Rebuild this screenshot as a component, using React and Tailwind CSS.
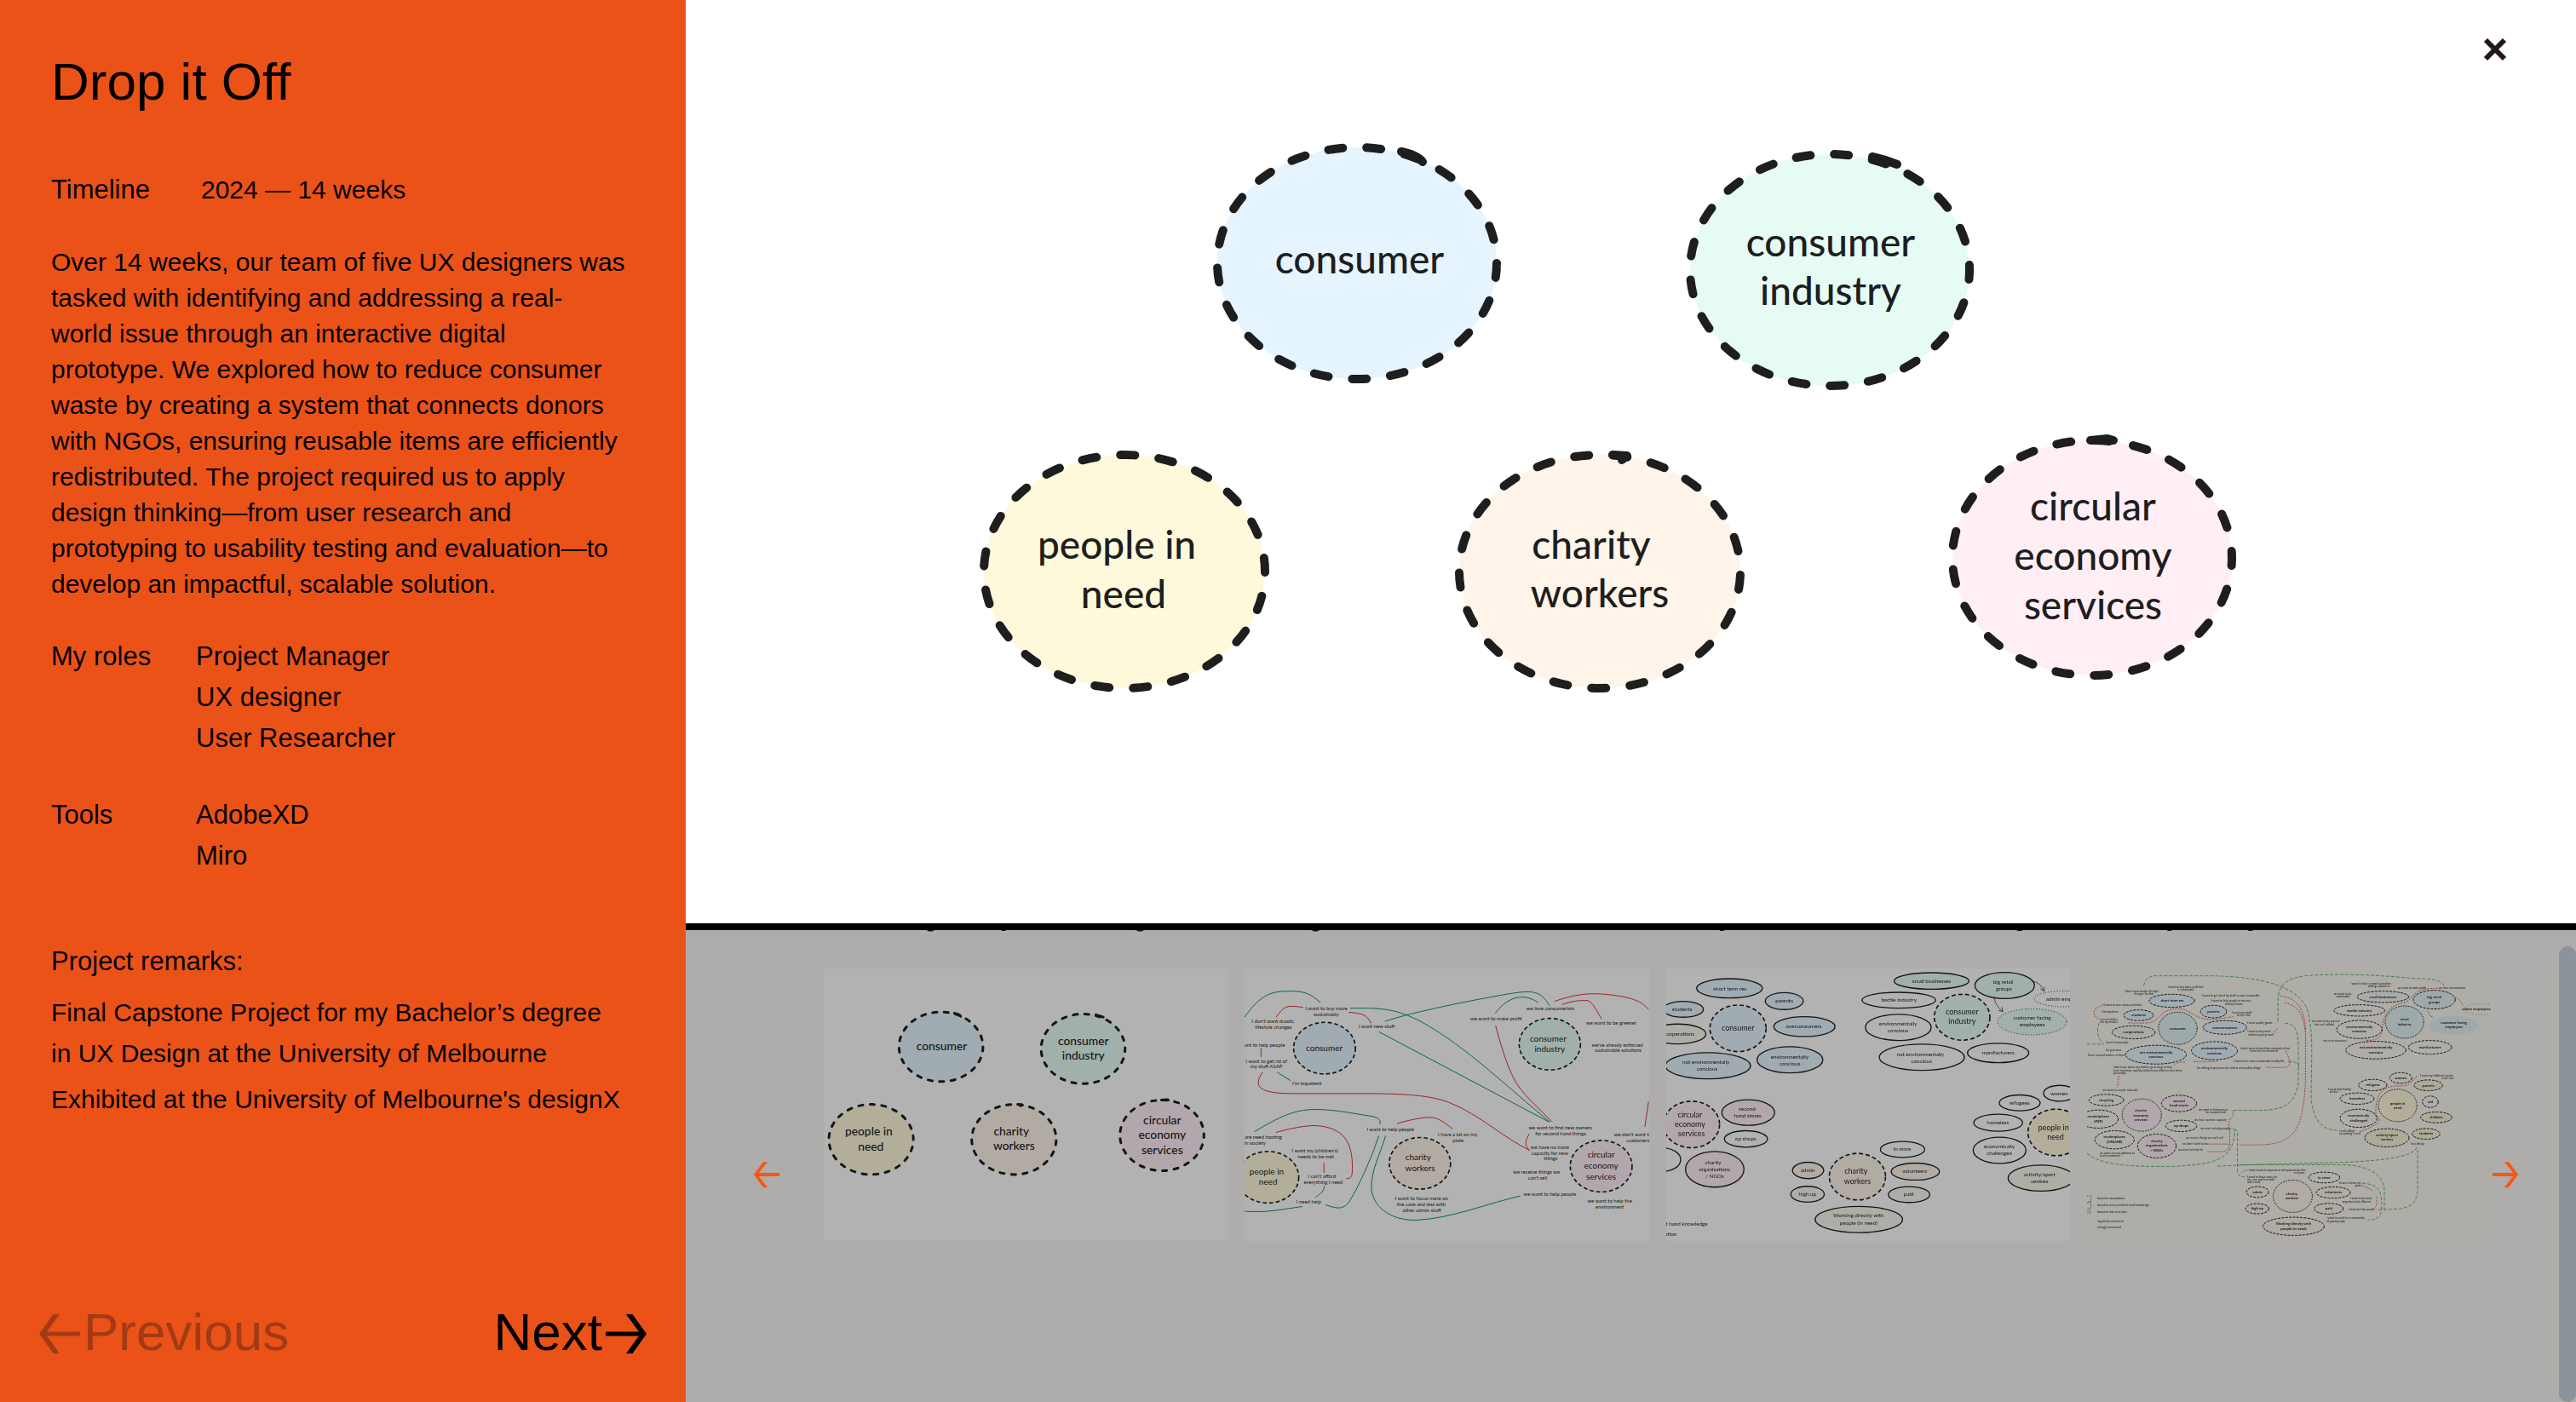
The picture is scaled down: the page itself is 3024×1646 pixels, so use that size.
import React from "react";

const BLUE = "#e5f4ff";
const GREEN = "#e6fbf4";
const YELLOW = "#fff9db";
const PEACH = "#fff4e9";
const PINK = "#ffeff5";
const INK = "#1e1e1e";

/* Centred lines of text; each line is [x, baseline, text]. */
function Labels({ lines, size, weight = 400, anchor = "middle" }) {
  return (
    <g fontSize={size} fontWeight={weight} textAnchor={anchor} fill={INK} fontFamily="Lato, sans-serif">
      {lines.map(([x, y, text], i) => (
        <text key={i} x={x} y={y}>
          {text}
        </text>
      ))}
    </g>
  );
}

/* Ellipses; each one is [cx, cy, rx, ry, fill]. */
function Bubbles({ items, width, dash, cap = "butt" }) {
  return items.map(([cx, cy, rx, ry, fill], i) => (
    <ellipse
      key={i}
      cx={cx}
      cy={cy}
      rx={rx}
      ry={ry}
      fill={fill || "none"}
      stroke={INK}
      strokeWidth={width}
      strokeDasharray={dash}
      strokeLinecap={cap}
    />
  ));
}

function Links({ paths, color, width, dash, opacity }) {
  return (
    <g fill="none" stroke={color} strokeWidth={width} strokeDasharray={dash} opacity={opacity}>
      {paths.map((d, i) => (
        <path key={i} d={d} />
      ))}
    </g>
  );
}

const groups = [
  { cx: 1593, cy: 309, rx: 164, ry: 136, fill: BLUE, offset: 0, tail: "M1645 178Q1664 182 1670 190" },
  { cx: 2148, cy: 317, rx: 164, ry: 136, fill: GREEN, offset: 6, tail: "M2198 184Q2212 187 2227 193" },
  { cx: 1320, cy: 671, rx: 165, ry: 137, fill: YELLOW, offset: 16, tail: "" },
  { cx: 1878, cy: 671, rx: 165, ry: 137, fill: PEACH, offset: -4, tail: "M1893 534L1910 535L1904 540" },
  { cx: 2456, cy: 655, rx: 164, ry: 138, fill: PINK, offset: 8, tail: "M2454 517L2474 515L2481 517" },
];

const groupLabels = [
  [1596, 321, "consumer"],
  [2149, 301, "consumer"],
  [2149, 358, "industry"],
  [1311, 656, "people in"],
  [1319, 714, "need"],
  [1868, 656, "charity"],
  [1878, 713, "workers"],
  [2457, 611, "circular"],
  [2457, 669, "economy"],
  [2457, 727, "services"],
];

function StakeholderMap({ viewBox, className, label }) {
  return (
    <svg viewBox={viewBox} className={className} role="img" aria-label={label}>
      {groups.map((g) => (
        <g key={g.cx} stroke={INK} strokeWidth="10" strokeLinecap="round" strokeLinejoin="round">
          <ellipse
            cx={g.cx}
            cy={g.cy}
            rx={g.rx}
            ry={g.ry}
            fill={g.fill}
            pathLength="945"
            strokeDasharray="17 28"
            strokeDashoffset={g.offset}
          />
          {g.tail && <path d={g.tail} fill="none" />}
        </g>
      ))}
      <Labels lines={groupLabels} size={46} weight={500} />
    </svg>
  );
}

function NeedsMap() {
  return (
    <svg viewBox="33 50 1424 960" className="block h-auto w-full bg-white" role="img" aria-label="Map of stakeholder needs">
      <Links
        color="#099268"
        width={3}
        paths={[
          "M33 222C90 140 130 130 190 130C250 130 265 140 300 170",
          "M405 190H470C560 192 600 210 660 240C820 330 960 470 1108 590",
          "M528 236L600 215C740 180 900 150 980 137C1060 125 1080 135 1108 182",
          "M916 208C950 165 980 152 1010 151C1040 151 1055 163 1068 170",
          "M506 273L1108 592",
          "M91 330V362",
          "M148 416L196 446",
          "M67 626C160 570 210 548 280 547C350 547 410 560 460 568C500 572 515 580 510 600",
          "M506 640C480 720 430 830 400 875C380 900 360 898 318 883",
          "M530 640C510 710 478 760 480 830C490 900 560 940 640 937C760 932 900 875 1005 852",
          "M314 815C315 835 300 845 283 857",
          "M33 906C110 912 160 900 237 889",
        ]}
      />
      <Links
        color="#e03131"
        width={3}
        paths={[
          "M144 222C175 180 180 180 240 187",
          "M400 205C450 207 465 215 479 243",
          "M1125 166C1200 140 1240 138 1290 140C1380 147 1430 160 1457 195",
          "M1152 177C1190 165 1210 162 1242 163C1262 170 1270 195 1292 228",
          "M918 252C950 370 975 440 1010 480C1040 520 1090 560 1117 592",
          "M96 416C60 470 90 490 200 491H480C620 492 700 500 760 525C860 565 950 650 1040 692",
          "M144 628C200 612 250 604 280 604C380 608 420 660 412 775Q410 792 390 791",
          "M313 735V770",
          "M570 597C620 582 660 575 690 575C720 578 740 595 766 616",
          "M1036 634C1018 665 1024 675 1036 690",
          "M1457 520L1444 608",
        ]}
      />
      <Bubbles
        width={5}
        dash="14 9"
        items={[
          [315, 331, 109, 91, BLUE],
          [1109, 317, 108, 91, GREEN],
          [115, 786, 109, 91, YELLOW],
          [651, 737, 108, 91, PEACH],
          [1290, 747, 109, 91, PINK],
        ]}
      />
      <Labels
        size={30}
        lines={[
          [314, 340, "consumer"],
          [1103, 307, "consumer"],
          [1109, 345, "industry"],
          [111, 776, "people in"],
          [116, 812, "need"],
          [645, 726, "charity"],
          [652, 764, "workers"],
          [1290, 718, "circular"],
          [1290, 757, "economy"],
          [1290, 794, "services"],
        ]}
      />
      <Labels
        size={18}
        lines={[
          [321, 196, "I want to buy more"],
          [321, 218, "sustainably"],
          [133, 242, "I don't want drastic"],
          [135, 263, "lifestyle changes"],
          [499, 259, "I want new stuff"],
          [92, 325, "I want to help people"],
          [110, 382, "I want to get rid of"],
          [110, 402, "my stuff ASAP"],
          [253, 462, "I'm impatient"],
          [1111, 196, "we love consumerism"],
          [920, 232, "we want to make profit"],
          [1326, 249, "we want to be greener"],
          [1347, 325, "we've already enforced"],
          [1350, 345, "sustainable solutions"],
          [547, 625, "I want to help people"],
          [784, 643, "I have a lot on my"],
          [786, 664, "plate"],
          [1146, 617, "we want to find new owners"],
          [1147, 639, "for second hand things"],
          [1420, 641, "we don't want to lose"],
          [1420, 662, "customers"],
          [1109, 687, "we have no more"],
          [1109, 707, "capacity for new"],
          [1112, 727, "things"],
          [85, 652, "we are need hosting"],
          [70, 672, "in society"],
          [281, 699, "I want my (children's)"],
          [284, 720, "needs to be met"],
          [306, 788, "I can't afford"],
          [310, 809, "everything I need"],
          [259, 880, "I need help"],
          [657, 866, "I want to focus more on"],
          [656, 887, "the case and less with"],
          [658, 908, "other admin stuff"],
          [1062, 775, "we receive things we"],
          [1066, 795, "can't sell"],
          [1109, 853, "we want to help people"],
          [1320, 875, "we want to help the"],
          [1320, 896, "environment"],
        ]}
      />
    </svg>
  );
}

function SegmentsMap() {
  return (
    <svg viewBox="45 50 1424 960" className="block h-auto w-full bg-white" role="img" aria-label="Map of stakeholder segments">
      <defs>
        <pattern id="hatch" width="12" height="12" patternUnits="userSpaceOnUse">
          <rect width="12" height="12" fill="#fbfaf4" />
          <path d="M0 12L12 0M0 0L12 12" stroke="#efe9cf" strokeWidth="1" />
        </pattern>
      </defs>
      <Bubbles
        width={4}
        items={[
          [268, 120, 116, 34, BLUE],
          [461, 165, 67, 30, BLUE],
          [105, 194, 71, 28, BLUE],
          [532, 255, 108, 35, BLUE],
          [85, 281, 100, 35, "url(#hatch)"],
          [192, 393, 150, 46, BLUE],
          [481, 372, 116, 46, BLUE],
          [980, 94, 132, 29, GREEN],
          [1238, 110, 105, 46, GREEN],
          [865, 162, 130, 28],
          [863, 258, 116, 46],
          [946, 363, 150, 46],
          [1215, 348, 108, 34],
          [334, 558, 93, 45, PINK],
          [326, 651, 76, 29],
          [30, 724, 66, 42],
          [216, 758, 103, 63, PINK],
          [878, 688, 78, 28],
          [545, 762, 55, 29, PEACH],
          [923, 766, 85, 30, PEACH],
          [543, 846, 59, 28, "url(#hatch)"],
          [901, 847, 73, 28, "url(#hatch)"],
          [724, 935, 154, 46, "url(#hatch)"],
          [1291, 524, 72, 28],
          [1432, 490, 57, 28],
          [1215, 594, 86, 30],
          [1220, 691, 93, 46],
          [1366, 789, 116, 46, "url(#hatch)"],
        ]}
      />
      <Bubbles
        width={3}
        dash="3 7"
        items={[
          [1335, 238, 122, 46, GREEN],
          [1450, 157, 108, 28],
        ]}
      />
      <Bubbles
        width={5}
        dash="15 9"
        items={[
          [298, 261, 99, 82, BLUE],
          [1088, 222, 98, 81, GREEN],
          [134, 600, 99, 82, PINK],
          [719, 784, 99, 82, PEACH],
          [1419, 628, 99, 82, YELLOW],
        ]}
      />
      <Links
        color={INK}
        width={2}
        paths={["M1338 96Q1362 98 1377 130M1377 130L1364 122M1377 130L1378 115", "M1202 152Q1202 180 1232 202M1232 202L1216 198M1232 202L1228 186"]}
      />
      <Labels
        size={27}
        lines={[
          [298, 269, "consumer"],
          [1088, 212, "consumer"],
          [1088, 246, "industry"],
          [129, 575, "circular"],
          [129, 609, "economy"],
          [134, 643, "services"],
          [714, 775, "charity"],
          [719, 809, "workers"],
          [1410, 620, "people in"],
          [1417, 653, "need"],
        ]}
      />
      <Labels
        size={19}
        lines={[
          [269, 127, "short term res"],
          [461, 171, "parents"],
          [101, 201, "students"],
          [530, 261, "overconsumers"],
          [92, 287, "corperations"],
          [185, 387, "not environmentally"],
          [189, 411, "concious"],
          [480, 367, "environmentally"],
          [481, 391, "concious"],
          [980, 100, "small businesses"],
          [1233, 103, "big retail"],
          [1236, 127, "groups"],
          [865, 168, "textile industry"],
          [862, 252, "environmentally"],
          [862, 276, "concious"],
          [941, 358, "not environmentally"],
          [945, 382, "concious"],
          [1215, 353, "manifacturers"],
          [1335, 231, "customer facing"],
          [1335, 255, "employees"],
          [1456, 163, "admin employees"],
          [330, 552, "second"],
          [332, 576, "hand stores"],
          [325, 657, "op shops"],
          [210, 740, "charity"],
          [215, 765, "organisations"],
          [216, 789, "/ NGOs"],
          [877, 694, "in store"],
          [544, 768, "admin"],
          [921, 771, "volunteers"],
          [543, 852, "high up"],
          [900, 852, "paid"],
          [723, 928, "Working directly with"],
          [723, 953, "people (in need)"],
          [1290, 530, "refugees"],
          [1431, 496, "women"],
          [1214, 599, "homeless"],
          [1219, 684, "economically"],
          [1219, 708, "challenged"],
          [1361, 783, "activity/sport"],
          [1361, 807, "centres"],
          [104, 956, "first hand knowledge"],
          [22, 992, "no assumption"],
        ]}
      />
    </svg>
  );
}

function FullMap() {
  return (
    <svg viewBox="0 0 1424 960" className="block h-auto w-full bg-[#f8f7ef]" role="img" aria-label="Complete ecosystem map">
      <Links
        color="#2f9e44"
        width={3}
        dash="12 6"
        opacity={0.75}
        paths={[
          "M200 62Q206 28 240 26H440C640 30 740 70 775 140C800 230 790 300 790 465C800 540 830 570 885 571",
          "M673 186V110C675 60 700 35 770 26C860 18 1000 20 1150 35Q1255 35 1257 62",
          "M697 193C740 195 745 230 745 290V400C735 480 690 500 610 500H513",
          "M710 328Q748 328 747 350",
          "M0 267H58C30 240 35 200 48 185",
          "M0 652C60 700 180 698 300 698C420 690 520 690 520 570Q515 562 500 565",
          "M520 565Q533 570 530 600V710Q530 735 555 735",
          "M460 697C600 690 720 688 880 684C1000 680 1160 670 1164 625",
          "M540 692H880C1000 690 1050 730 1048 790V850",
          "M1165 640V770C1165 850 1120 850 1020 850",
          "M970 757C1040 760 1040 800 1038 850Q1035 888 990 886",
        ]}
      />
      <Links
        color="#e03131"
        width={3}
        dash="6 4"
        opacity={0.8}
        paths={[
          "M145 192C250 195 230 190 270 155C320 130 350 145 380 165C430 190 450 178 515 170",
          "M60 128C10 140 20 170 45 180",
          "M680 97C740 100 770 150 770 220V400C760 560 740 622 600 622H535",
          "M697 121C740 130 765 160 768 220",
          "M700 290C720 330 720 350 690 349H632",
          "M375 328H460",
          "M345 330Q320 328 305 342",
          "M112 378L107 420",
          "M653 232L670 212",
          "M513 503Q520 520 505 530C495 545 503 560 503 590V622Q500 646 470 646H425",
          "M435 619H503",
          "M1237 70C1140 70 1160 100 1120 120C1060 130 1045 170 1042 200C1040 250 1020 255 980 253",
          "M1163 379C1140 400 1140 416 1100 414C1040 414 1015 440 1018 520Q1060 540 960 576",
          "M543 722Q555 710 570 711",
          "M970 764L1008 783M1021 805V835L1008 850",
        ]}
      />
      <Bubbles
        width={3}
        dash="9 4"
        items={[
          [299, 114, 80, 23, BLUE],
          [182, 165, 52, 19, BLUE],
          [446, 152, 46, 22, BLUE],
          [164, 225, 76, 23, "#f0f3ee"],
          [486, 208, 77, 24, BLUE],
          [243, 304, 107, 33, BLUE],
          [449, 290, 81, 32, BLUE],
          [1043, 100, 91, 20, "#eef5f3"],
          [1224, 110, 74, 33, "#e2f1f3"],
          [960, 148, 90, 20],
          [960, 215, 80, 32],
          [1018, 288, 106, 31],
          [1209, 278, 76, 24],
          [68, 464, 61, 20],
          [324, 476, 62, 29, PINK],
          [40, 531, 70, 32],
          [332, 555, 55, 20],
          [97, 604, 69, 32],
          [246, 626, 68, 42, PINK],
          [836, 737, 55, 19],
          [601, 788, 39, 19, PEACH],
          [868, 790, 60, 20, PEACH],
          [600, 847, 41, 18, "#fbf3ea"],
          [852, 847, 51, 19, "#fbf3ea"],
          [728, 909, 108, 32, "#fbf3ea"],
          [1106, 386, 39, 19],
          [1007, 411, 50, 20],
          [1203, 412, 50, 19, "#f7f3d8"],
          [952, 459, 60, 20],
          [1210, 470, 28, 20],
          [957, 528, 65, 32],
          [1231, 525, 55, 19, "#f7f3d8"],
          [1057, 597, 78, 32, "#f7f3d8"],
          [1195, 583, 49, 19, "#f7f3d8"],
        ]}
      />
      <ellipse cx="1293" cy="200" rx="87" ry="33" fill="#e2f1f3" />
      <Bubbles
        width={3}
        dash="5 4"
        items={[
          [320, 211, 68, 57, "#e2f1f3"],
          [1119, 189, 68, 57, "#e2f1f3"],
          [193, 517, 69, 57, PINK],
          [725, 803, 69, 57, PEACH],
          [1095, 483, 68, 57, YELLOW],
        ]}
      />
      <Bubbles width={2} dash="2 9" items={[[1390, 144, 62, 20]]} />
      <Links color={INK} width={2} dash="3 3" paths={["M1298 102Q1318 110 1324 130", "M1200 150Q1205 165 1222 175", "M0 802H14V822H0", "M0 826H14V845H0"]} />
      <rect x="0" y="850" width="15" height="16" fill="#cfd6e4" />
      <Labels
        size={13}
        weight={700}
        lines={[
          [320, 216, "consumer"],
          [300, 118, "short term res"],
          [182, 169, "students"],
          [446, 156, "parents"],
          [164, 229, "corperations"],
          [486, 212, "overconsumers"],
          [243, 300, "not environmentally"],
          [243, 316, "concious"],
          [449, 286, "environmentally"],
          [449, 302, "concious"],
          [1119, 184, "retail"],
          [1119, 200, "industry"],
          [1043, 104, "small businesses"],
          [1224, 106, "big retail"],
          [1224, 122, "groups"],
          [960, 152, "textile industry"],
          [960, 210, "environmentally"],
          [960, 226, "concious"],
          [1018, 283, "not environmentally"],
          [1018, 299, "concious"],
          [1209, 282, "manifacturers"],
          [1293, 195, "customer facing"],
          [1293, 211, "employees"],
          [1372, 147, "admin employees"],
          [190, 504, "circular"],
          [190, 521, "economy"],
          [190, 538, "services"],
          [68, 468, "recycling"],
          [324, 471, "second"],
          [324, 487, "hand stores"],
          [40, 526, "marketplaces"],
          [40, 542, "(P2P)"],
          [332, 559, "op shops"],
          [97, 599, "marketplaces"],
          [97, 615, "(ONLINE)"],
          [246, 613, "charity"],
          [246, 629, "organisations"],
          [246, 645, "/ NGOs"],
          [722, 798, "charity"],
          [722, 814, "workers"],
          [836, 741, "in store"],
          [601, 792, "admin"],
          [868, 794, "volunteers"],
          [600, 851, "high up"],
          [852, 851, "paid"],
          [728, 905, "Working directly with"],
          [728, 921, "people (in need)"],
          [1095, 480, "people in"],
          [1095, 496, "need"],
          [1106, 390, "women"],
          [1007, 415, "refugees"],
          [1203, 416, "parents"],
          [952, 463, "homeless"],
          [1210, 474, "old"],
          [957, 523, "economically"],
          [957, 539, "challenged"],
          [1231, 529, "children"],
          [1057, 592, "activity/sport"],
          [1057, 608, "centres"],
          [1195, 587, "students"],
        ]}
      />
      <Labels
        size={10}
        anchor="start"
        lines={[
          [132, 84, "I don't want drastic lifestyle"],
          [165, 94, "changes for this"],
          [285, 69, "I want to buy more stuff that"],
          [320, 79, "is sustainable"],
          [405, 100, "I want to get rid of my stuff as soon as possible"],
          [438, 118, "I want to help people in my area"],
          [486, 129, "without hassle"],
          [510, 158, "I want new stuff"],
          [528, 168, "all the time"],
          [60, 132, "I want to save money and time"],
          [52, 155, "I'm impatient"],
          [47, 184, "I need clothes"],
          [47, 193, "for my studies"],
          [565, 196, "I want quality goods"],
          [566, 226, "I want to buy more"],
          [568, 236, "without paying more"],
          [65, 265, "I want help people"],
          [65, 290, "I'm generous"],
          [2, 310, "I have unused clothes at home"],
          [540, 284, "I don't want to buy from companies that"],
          [575, 295, "harm the environment"],
          [518, 330, "I want to be more sustainable in daily life"],
          [387, 353, "I'm willing to pay more for ethical and quality things"],
          [92, 352, "I don't care where my clothes go as long as they"],
          [92, 362, "leave my house quickly, without any effort or cost to me"],
          [92, 372, "personally"],
          [55, 431, "we want to recycle materials"],
          [393, 500, "we want to find owners"],
          [418, 510, "for second hand"],
          [378, 536, "we have no more capacity"],
          [400, 569, "we want to help people"],
          [348, 602, "we receive things we can't sell"],
          [337, 623, "we don't want to lose"],
          [322, 644, "we want to help the"],
          [45, 655, "we want an easy platform to"],
          [45, 665, "reach customers"],
          [928, 57, "I want to have a good reputation"],
          [990, 67, "among customers"],
          [1095, 71, "we want to make profit"],
          [1240, 72, "we love consumerism"],
          [870, 93, "we want to be"],
          [878, 103, "sustainable"],
          [793, 190, "we want to be greener"],
          [803, 200, "but can't afford"],
          [833, 258, "we need resources"],
          [1175, 381, "I want my children's needs"],
          [1250, 391, "to be met"],
          [850, 429, "I need help finding"],
          [855, 439, "shelter"],
          [888, 576, "I can't afford"],
          [888, 586, "everything I need"],
          [1140, 621, "I need help"],
          [570, 714, "I don't want to depend on old systems for this"],
          [730, 724, "in future"],
          [565, 738, "I want to focus more on"],
          [565, 748, "the case and less with"],
          [565, 758, "other stuff"],
          [888, 759, "I have a lot on my"],
          [945, 769, "plate"],
          [928, 815, "I want to be more"],
          [900, 825, "organised and efficient"],
          [922, 852, "I want to help people"],
          [845, 884, "I want to work in a community"],
          [845, 894, "of good people"],
          [36, 813, "based on assumptions"],
          [36, 838, "based on survey and first hand knowledge"],
          [36, 861, "based on interview data"],
          [36, 894, "negatively connected"],
          [36, 917, "strongly connected"],
        ]}
      />
    </svg>
  );
}

function Arrow({ className, flip }) {
  return (
    <svg viewBox="0 0 48 46" className={className} aria-hidden="true">
      <g transform={flip ? "matrix(-1 0 0 1 48 0)" : undefined}>
        <path d="M0 20.500H39L24 0H31.500L48 23L31.500 46H24L39 25.500H0Z" fill="currentColor" />
      </g>
    </svg>
  );
}

function SmallArrow({ flip }) {
  return (
    <svg viewBox="0 0 30 30" className="block size-[30px]" aria-hidden="true">
      <g transform={flip ? "matrix(-1 0 0 1 30 0)" : undefined}>
        <path d="M0 13H24L14 0H19L30 15L19 30H14L24 17H0Z" fill="currentColor" />
      </g>
    </svg>
  );
}

function Facts({ term, items }) {
  return (
    <div className="flex text-[31px] leading-[48px]">
      <dt className="w-[170px] shrink-0">{term}</dt>
      <dd>
        {items.map((item) => (
          <p key={item}>{item}</p>
        ))}
      </dd>
    </div>
  );
}

function Sidebar() {
  return (
    <aside className="flex flex-col bg-[#eb5218] pb-[46px]">
      <div className="px-[60px] pt-[60px]">
        <h1 className="text-[62px] leading-[72px]">Drop it Off</h1>
        <dl className="mt-[67px] flex">
          <dt className="w-[176px] shrink-0 text-[31px] leading-[48px]">Timeline</dt>
          <dd className="text-[30px] leading-[48px]">2024 — 14 weeks</dd>
        </dl>
        <p className="mt-[40px] text-[30px] leading-[42px]">
          Over 14 weeks, our team of five UX designers was
          <br />
          tasked with identifying and addressing a real-
          <br />
          world issue through an interactive digital
          <br />
          prototype. We explored how to reduce consumer
          <br />
          waste by creating a system that connects donors
          <br />
          with NGOs, ensuring reusable items are efficiently
          <br />
          redistributed. The project required us to apply
          <br />
          design thinking—from user research and
          <br />
          prototyping to usability testing and evaluation—to
          <br />
          develop an impactful, scalable solution.
        </p>
        <dl className="mt-[40px] flex flex-col gap-[42px]">
          <Facts term="My roles" items={["Project Manager", "UX designer", "User Researcher"]} />
          <Facts term="Tools" items={["AdobeXD", "Miro"]} />
        </dl>
        <h2 className="mt-[76px] text-[31px] leading-[48px]">Project remarks:</h2>
        <p className="mt-[12px] text-[30px] leading-[48px]">
          Final Capstone Project for my Bachelor’s degree
          <br />
          in UX Design at the University of Melbourne
        </p>
        <p className="mt-[6px] text-[30px] leading-[48px]">Exhibited at the University of Melbourne's designX</p>
      </div>
      <nav className="mt-auto flex justify-between px-[46px] text-[62px] leading-[72px]">
        <button type="button" disabled className="flex items-center gap-[4px] text-[#a23b15]">
          <Arrow flip className="mt-1 h-[46px] w-[48px]" />
          Previous
        </button>
        <button type="button" className="flex items-center gap-[4px]">
          Next
          <Arrow className="mt-1 h-[46px] w-[48px]" />
        </button>
      </nav>
    </aside>
  );
}

function ClippedLine() {
  return (
    <svg viewBox="805 0 2219 2" className="block h-[2px] w-full" preserveAspectRatio="none" aria-hidden="true">
      <path
        d="M1090 0h10l-3 1.500h-4zM1179 0h5v1h-5zM1338 0h10l-3 1.500h-4zM1546 0h10l-3 1.500h-4zM2030 0h5v1h-5zM2382 0h6v1h-6zM2560 0h5v1h-5zM2656 0h5v1h-5z"
        fill="#1a1a1a"
      />
    </svg>
  );
}

export default function App() {
  return (
    <div className="grid min-h-screen grid-cols-[805fr_2219fr] bg-[#aeadab] font-['Liberation_Sans',Arial,sans-serif] text-black">
      <Sidebar />
      <main className="flex min-w-0 flex-col">
        <section className="relative border-b-8 border-black bg-white">
          <StakeholderMap viewBox="805 0 2219 1084" className="block h-auto w-full" label="Map of stakeholder groups" />
          <button type="button" aria-label="Close" className="absolute top-[44px] right-[81px]">
            <svg viewBox="0 0 28 28" className="block size-[28px]" aria-hidden="true">
              <path d="M3 3L25 25M25 3L3 25" stroke="#231815" strokeWidth="6" />
            </svg>
          </button>
        </section>
        <section className="flex flex-1">
          <div className="min-w-0 flex-1">
            <ClippedLine />
            <div className="flex items-start pt-[43px] pr-[48px] pl-[80px]">
              <button type="button" aria-label="Scroll back" className="mt-[227px] shrink-0 text-[#f9560f]">
                <SmallArrow flip />
              </button>
              <div className="ml-[52px] mr-[2px] grid min-w-0 flex-1 grid-cols-4 gap-[20px] brightness-70">
                <StakeholderMap
                  viewBox="1135 3 1578 1063"
                  className="block h-auto w-full bg-white"
                  label="Stakeholder groups"
                />
                <NeedsMap />
                <SegmentsMap />
                <FullMap />
              </div>
              <button type="button" aria-label="Scroll forward" className="mt-[227px] shrink-0 text-[#f9560f]">
                <SmallArrow />
              </button>
            </div>
          </div>
          <div className="mt-[19px] w-[20px] rounded-[10px] bg-[#8b939b]" />
        </section>
      </main>
    </div>
  );
}
